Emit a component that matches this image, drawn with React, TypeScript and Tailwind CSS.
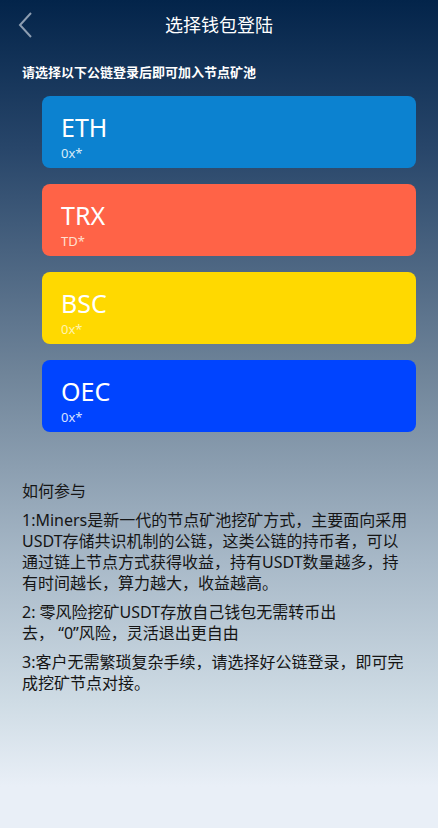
import React from "react";

const chains = [
  { name: "ETH", sub: "0x*", bg: "bg-[#0c82d0]", sc: "text-[#d8ecf8]" },
  { name: "TRX", sub: "TD*", bg: "bg-[#ff6347]", sc: "text-[#ffe0d0]" },
  { name: "BSC", sub: "0x*", bg: "bg-[#ffd900]", sc: "text-[#fff4b0]" },
  { name: "OEC", sub: "0x*", bg: "bg-[#0044ff]", sc: "text-[#d8e2ff]" },
];

export default function App() {
  return (
    <div
      className="w-[438px] min-h-[828px] bg-[linear-gradient(to_bottom,#03244a_0%,#28466a_18%,#6f8499_45%,#a8b9c8_68%,#cfdce5_85%,#e9eff7_95%,#e9eff7_100%)] text-white"
      style={{ fontFamily: '"Noto Sans", "Noto Sans CJK SC", sans-serif' }}
    >
      <div className="relative h-[50px] flex items-center justify-center">
        <svg
          className="absolute left-[16px] top-[11px]"
          width="20"
          height="28"
          viewBox="0 0 20 28"
          fill="none"
        >
          <path d="M15 2 L4 14 L15 26" stroke="#8d9db1" strokeWidth="2" />
        </svg>
        <div className="text-[18px] leading-[24px]">选择钱包登陆</div>
      </div>
      <div className="pl-[22px] pt-[13px] text-[13px] leading-[18px] font-bold">
        请选择以下公链登录后即可加入节点矿池
      </div>
      <div className="mt-[15px] ml-[42px] mr-[22px] flex flex-col gap-[16px]">
        {chains.map((c) => (
          <div
            key={c.name}
            className={`${c.bg} h-[72px] rounded-[8px] pl-[19px] pt-[14px] flex flex-col`}
          >
            <div className="text-[25px] leading-[34px]">{c.name}</div>
            <div className={`${c.sc} text-[13px] leading-[18px]`}>{c.sub}</div>
          </div>
        ))}
      </div>
      <div className="mt-[49px] pl-[22px] pr-[28px] text-[#151515] text-[16px] leading-[21px]">
        <p>如何参与</p>
        <p className="mt-[8px]">
          1:Miners是新一代的节点矿池挖矿方式，主要面向采用USDT存储共识机制的公链，这类公链的持币者，可以通过链上节点方式获得收益，持有USDT数量越多，持有时间越长，算力越大，收益越高。
        </p>
        <p className="mt-[8px]">
          2: 零风险挖矿USDT存放自己钱包无需转币出
          <br />
          去， “0”风险，灵活退出更自由
        </p>
        <p className="mt-[8px]">
          3:客户无需繁琐复杂手续，请选择好公链登录，即可完成挖矿节点对接。
        </p>
      </div>
    </div>
  );
}
